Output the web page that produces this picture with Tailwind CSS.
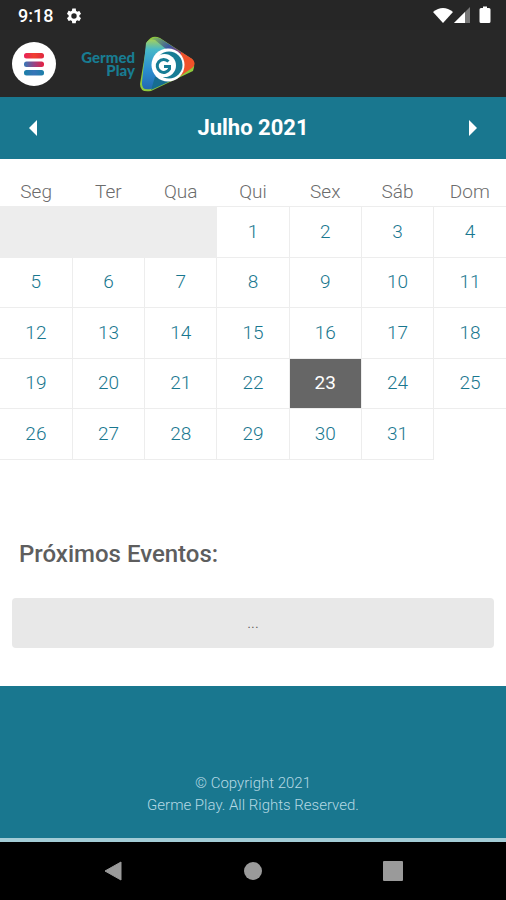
<!DOCTYPE html>
<html lang="pt-BR">
<head>
<meta charset="utf-8">
<meta name="viewport" content="width=device-width, initial-scale=1">
<title>Germed Play</title>
<script src="https://cdn.jsdelivr.net/npm/@tailwindcss/browser@4"></script>
</head>
<body class="flex min-h-screen flex-col bg-white font-['Roboto',sans-serif]">
<div class="flex h-[30px] items-center justify-between bg-[#262626] pr-[14px] pl-[18px] text-white">
  <div class="flex items-center gap-3">
    <span class="pt-[2px] text-[18px] leading-[24px] font-medium">9:18</span>
    <svg class="mt-[2px] size-[18px]" viewBox="0 0 24 24" fill="currentColor" aria-hidden="true"><path d="M19.14 12.94c.04-.3.06-.61.06-.94 0-.32-.02-.64-.07-.94l2.03-1.58a.49.49 0 0 0 .12-.61l-1.92-3.32a.49.49 0 0 0-.59-.22l-2.39.96a7 7 0 0 0-1.62-.94l-.36-2.54A.48.48 0 0 0 13.92 2h-3.84a.47.47 0 0 0-.47.41l-.36 2.54c-.59.24-1.13.57-1.62.94l-2.39-.96a.47.47 0 0 0-.59.22L2.74 8.87a.47.47 0 0 0 .12.61l2.03 1.58c-.05.3-.09.63-.09.94s.02.64.07.94l-2.03 1.58a.49.49 0 0 0-.12.61l1.92 3.32c.12.22.37.29.59.22l2.39-.96c.5.38 1.03.7 1.62.94l.36 2.54c.05.24.24.41.48.41h3.84c.24 0 .44-.17.47-.41l.36-2.54a7 7 0 0 0 1.62-.94l2.39.96c.22.08.47 0 .59-.22l1.92-3.32a.47.47 0 0 0-.12-.61zM12 15.6A3.6 3.6 0 1 1 12 8.400a3.600 3.600 0 0 1 0 7.200z"/></svg>
  </div>
  <svg class="h-[18px] w-[60px]" viewBox="0 0 60 18" fill="currentColor" aria-hidden="true">
    <path d="M1 6Q11 -2 21 6L11 17Z"/>
    <path d="M38 1V17H22Z" fill="#777"/><path d="M33 6V17H22Z"/>
    <path d="M49 2h2V0.500h4V2h2q1.500 0 1.500 1.500v12q0 1.500-1.500 1.500h-8q-1.500 0-1.500-1.500v-12q0-1.500 1.500-1.500z"/>
  </svg>
</div>

<header class="flex h-[67px] items-center bg-[#282828] pl-3">
  <button type="button" aria-label="Menu" class="flex size-11 items-center justify-center rounded-full bg-white">
    <svg class="h-6 w-5" viewBox="0 0 20 24" aria-hidden="true">
      <defs>
        <linearGradient id="bar1"><stop stop-color="#e8205a"/><stop offset=".5" stop-color="#f04030"/><stop offset="1" stop-color="#e02840"/></linearGradient>
        <linearGradient id="bar2"><stop stop-color="#3478b8"/><stop offset=".55" stop-color="#a04080"/><stop offset="1" stop-color="#e82040"/></linearGradient>
        <linearGradient id="bar3"><stop stop-color="#1a80a8"/><stop offset=".5" stop-color="#3874b8"/><stop offset="1" stop-color="#1a80a8"/></linearGradient>
      </defs>
      <rect width="20" height="5.500" y="1" rx="2.500" fill="url(#bar1)"/><rect width="20" height="5.500" y="9.500" rx="2.500" fill="url(#bar2)"/><rect width="20" height="5.500" y="18" rx="2.500" fill="url(#bar3)"/>
    </svg>
  </button>
  <a href="#" class="ml-[22px] flex items-center text-[#187c92]">
    <span class="flex w-[57px] flex-col items-end font-['Lato',sans-serif] text-[15px] leading-[13px] font-black"><span>Germed</span><span>Play</span></span>
    <svg class="h-[62px] w-[65px]" viewBox="0 0 65 62" aria-hidden="true">
      <defs>
        <linearGradient id="left" x1="0" y1="0" x2="0" y2="1"><stop stop-color="#a5d05a"/><stop offset=".2" stop-color="#48b8c8"/><stop offset=".6" stop-color="#2b8fd0"/><stop offset="1" stop-color="#2468b0"/></linearGradient>
        <linearGradient id="top" x1="0" y1="0" x2="1" y2=".7"><stop stop-color="#8cc850"/><stop offset=".4" stop-color="#3a58a0"/><stop offset=".7" stop-color="#a03868"/><stop offset="1" stop-color="#f04a20"/></linearGradient>
      </defs>
      <path d="M12 9Q17 1 25 5L57 26Q61 30 58 38L16 58Q5 60 5 51Z" fill="#8fca3c"/>
      <path d="M15 8Q19 2 26 6L57 26Q61 30 58 34L33 42Z" fill="url(#top)"/>
      <path d="M46 19L57 26Q62 30 57 35L44 44Z" fill="#f0522a"/>
      <path d="M11 10Q14 5 20 7L31 16L25 48L16 56Q6 58 7 49Z" fill="url(#left)"/>
      <path d="M20 44L40 46L16 57Z" fill="#176d90"/>
      <circle cx="33" cy="32" r="16.500" fill="#fff"/>
      <circle cx="34" cy="32" r="13.500" fill="#177c95"/>
      <circle cx="29.500" cy="32.500" r="11.500" fill="#fff"/>
      <path d="M33.500 28.500A6.500 6.500 0 1 0 34.500 36V33.500H29" fill="none" stroke="#177c95" stroke-width="3"/>
    </svg>
  </a>
</header>

<main class="flex flex-1 flex-col">
  <div class="flex h-[62px] items-center justify-between bg-[#19778f] px-[17px] text-white">
    <button type="button" aria-label="Mês anterior" class="flex size-8 items-center justify-center"><svg class="h-4 w-2" viewBox="0 0 8 16" fill="currentColor"><path d="M8 0V16L0 8Z"/></svg></button>
    <h1 class="text-[22px] leading-7 font-bold">Julho 2021</h1>
    <button type="button" aria-label="Próximo mês" class="flex size-8 items-center justify-center"><svg class="h-4 w-2" viewBox="0 0 8 16" fill="currentColor"><path d="M0 0V16L8 8Z"/></svg></button>
  </div>

  <table class="w-full table-fixed border-collapse text-center text-[19px] leading-6 font-light text-[#19778f] [&_a]:block [&_td]:border [&_td]:border-[#ededed] [&_tr>*:first-child]:border-l-0 [&_tr>*:last-child]:border-r-0">
    <thead>
      <tr class="h-[47px] text-[#6c6c6c] [&_th]:pt-5 [&_th]:font-light">
        <th scope="col">Seg</th><th scope="col">Ter</th><th scope="col">Qua</th><th scope="col">Qui</th><th scope="col">Sex</th><th scope="col">Sáb</th><th scope="col">Dom</th>
      </tr>
    </thead>
    <tbody class="[&>tr]:odd:h-[51px] [&>tr]:even:h-[50px]">
      <tr><td colspan="3" class="bg-[#ededed]"></td><td><a href="#">1</a></td><td><a href="#">2</a></td><td><a href="#">3</a></td><td><a href="#">4</a></td></tr>
      <tr><td><a href="#">5</a></td><td><a href="#">6</a></td><td><a href="#">7</a></td><td><a href="#">8</a></td><td><a href="#">9</a></td><td><a href="#">10</a></td><td><a href="#">11</a></td></tr>
      <tr><td><a href="#">12</a></td><td><a href="#">13</a></td><td><a href="#">14</a></td><td><a href="#">15</a></td><td><a href="#">16</a></td><td><a href="#">17</a></td><td><a href="#">18</a></td></tr>
      <tr><td><a href="#">19</a></td><td><a href="#">20</a></td><td><a href="#">21</a></td><td><a href="#">22</a></td><td class="bg-[#666] font-normal text-white"><a href="#" aria-current="date">23</a></td><td><a href="#">24</a></td><td><a href="#">25</a></td></tr>
      <tr><td><a href="#">26</a></td><td><a href="#">27</a></td><td><a href="#">28</a></td><td><a href="#">29</a></td><td><a href="#">30</a></td><td class="border-r!"><a href="#">31</a></td></tr>
    </tbody>
  </table>

  <section class="px-3 pt-20 pb-[37px]">
    <h2 class="px-[7px] text-[24px] leading-7 font-medium text-[#5e5e5e]">Próximos Eventos:</h2>
    <div class="mt-[30px] flex h-[50px] items-center justify-center rounded bg-[#e8e8e8] text-[16px] leading-6 font-light text-[#555]">...</div>
  </section>
</main>

<footer class="border-b-4 border-[#a3ccd6] bg-[#19778f] pt-[86px] pb-[22px] text-center text-[15px] leading-[22px] font-light text-[#b5d9e4]">
  <p>© Copyright 2021</p>
  <p>Germe Play. All Rights Reserved.</p>
</footer>

<nav aria-label="Sistema" class="flex h-[58px] items-center justify-center gap-[116px] bg-black text-[#9a9a9a]">
  <button type="button" aria-label="Voltar" class="flex size-6 items-center justify-center"><svg class="h-5 w-[18px]" viewBox="0 0 18 20" fill="currentColor"><path d="M17 1V19L1 10Z" stroke="currentColor" stroke-linejoin="round"/></svg></button>
  <button type="button" aria-label="Início" class="flex size-6 items-center justify-center"><svg class="size-[18px]" viewBox="0 0 18 18" fill="currentColor"><circle cx="9" cy="9" r="9"/></svg></button>
  <button type="button" aria-label="Recentes" class="flex size-6 items-center justify-center"><svg class="size-5" viewBox="0 0 20 20" fill="currentColor"><rect width="20" height="20" rx="1"/></svg></button>
</nav>
</body>
</html>
